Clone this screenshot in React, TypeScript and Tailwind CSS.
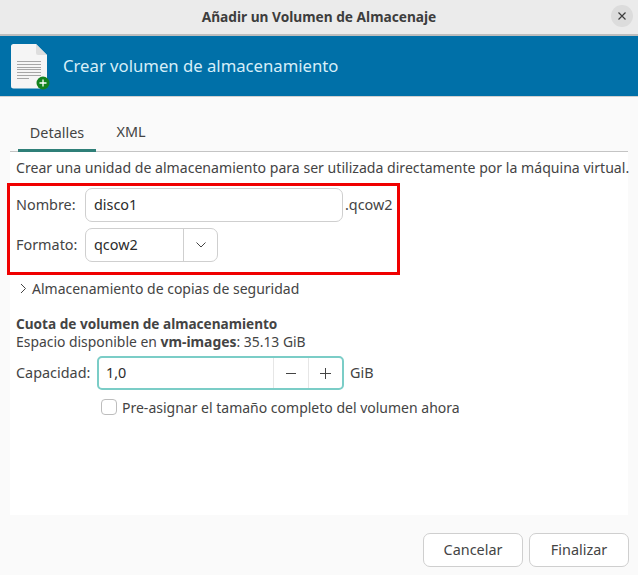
import React from "react";

const font = { fontFamily: "'Noto Sans', sans-serif" };

function DocIcon() {
  return (
    <svg width="42" height="48" viewBox="0 0 42 48" className="shrink-0">
      <path d="M3.500 2H26l11 11v31a2.500 2.500 0 0 1-2.500 2.500h-31A2.500 2.500 0 0 1 1 44V4.500a2.500 2.500 0 0 1 2.500-2.500z" fill="#f5f5f5" />
      <path d="M26 2l11 11h-9a2 2 0 0 1-2-2z" fill="#dedede" />
      <g stroke="#a6a6a6" strokeWidth="1">
        <path d="M7 19.500h24M7 22.500h24M7 25.500h24M7 27.500h24M7 30.500h24M7 33.500h24M7 36.500h12" />
      </g>
      <circle cx="33" cy="41" r="6.500" fill="#13831f" />
      <path d="M33 37.500v7M29.500 41h7" stroke="#fff" strokeWidth="1.300" />
    </svg>
  );
}

export default function App() {
  return (
    <div style={font} className="w-[638px] h-[575px] flex flex-col bg-[#fafafa] text-[14.4px] text-[#444444] overflow-hidden">
      <div className="h-[36px] shrink-0 relative flex items-center justify-center bg-[#ebebeb] border-b-2 border-[#bdbdbd]">
        <span className="font-bold text-[13.7px] text-[#3d3d3d]">Añadir un Volumen de Almacenaje</span>
        <button className="absolute right-[5px] top-[5px] w-[22px] h-[22px] rounded-full bg-[#dcdcdc] flex items-center justify-center">
          <svg width="10" height="10" viewBox="0 0 10 10">
            <path d="M1.500 1.500l7 7M8.500 1.500l-7 7" stroke="#3d3d3d" strokeWidth="1.200" />
          </svg>
        </button>
      </div>

      <div className="h-[61px] shrink-0 flex items-center bg-[#0070a8] border-b border-[#d0d0d0] pl-[10px] gap-[11px]">
        <DocIcon />
        <span className="text-[16.7px] text-[#d6eef8]">Crear volumen de almacenamiento</span>
      </div>

      <div className="h-[55px] shrink-0 flex items-end pl-[10px] pr-[10px]">
        <div className="flex w-full h-[36px] border-b border-[#c4c4c4]">
          <div className="w-[78px] ml-[8px] flex items-center justify-center border-b-[3px] border-[#2f7f78] -mb-px">Detalles</div>
          <div className="ml-[2px] w-[66px] flex items-center justify-center pb-[3px]">XML</div>
        </div>
      </div>

      <div className="h-[363px] shrink-0 mx-[10px] bg-white flex flex-col">
        <p className="pl-[6px] mt-[5px] h-[21px] leading-[21px] whitespace-nowrap text-[14.1px]">Crear una unidad de almacenamiento para ser utilizada directamente por la máquina virtual.</p>
        <div className="w-[393px] h-[92px] -ml-[3px] mt-[5px] border-[3px] border-[#f00000] flex flex-col pl-[6px] pt-[2px] gap-[6px]">
          <div className="flex items-center h-[34px]">
            <span className="w-[69px] pb-px">Nombre:</span>
            <div className="w-[258px] h-[34px] rounded-[7px] border border-[#cfcfcf] flex items-center px-[8px] pb-px text-[#2b2b2b]">disco1</div>
            <span className="ml-[2px] pb-px">.qcow2</span>
          </div>
          <div className="flex items-center h-[34px]">
            <span className="w-[69px] pb-px">Formato:</span>
            <div className="w-[133px] h-[34px] rounded-[7px] border border-[#cfcfcf] flex items-center text-[#2b2b2b]">
              <span className="w-[97px] pl-[8px] pb-px">qcow2</span>
              <span className="h-full flex-1 border-l border-[#cfcfcf] flex items-center justify-center">
                <svg width="12" height="8" viewBox="0 0 12 8"><path d="M1.500 1.500L6 6l4.500-4.500" fill="none" stroke="#444" strokeWidth="1" /></svg>
              </span>
            </div>
          </div>
        </div>
        <div className="flex items-center pl-[10px] mt-[2px] h-[22px] gap-[5px] text-[14px]">
          <svg width="7" height="11" viewBox="0 0 7 11"><path d="M1 1l4.500 4.500L1 10" fill="none" stroke="#444" strokeWidth="1" /></svg>
          <span>Almacenamiento de copias de seguridad</span>
        </div>
        <div className="pl-[6px] mt-[16px] font-bold text-[13.6px] h-[18px] leading-[18px]">Cuota de volumen de almacenamiento</div>
        <div className="pl-[6px] h-[18px] leading-[18px] text-[13.9px]">Espacio disponible en <b>vm-images</b>: 35.13 GiB</div>
        <div className="flex items-center pl-[6px] mt-[5px] h-[34px]">
          <span className="w-[81px] pb-px">Capacidad:</span>
          <div className="w-[247px] h-[34px] rounded-[5px] border-2 border-[#7bcdc7] flex items-center text-[#2b2b2b]">
            <span className="w-[174px] pl-[7px] pb-px">1,0</span>
            <span className="h-full w-[35px] border-l border-[#e6e6e6] flex items-center justify-center">
              <svg width="12" height="12" viewBox="0 0 12 12"><path d="M1 6.500h10" stroke="#444" strokeWidth="1" /></svg>
            </span>
            <span className="h-full flex-1 border-l border-[#e6e6e6] flex items-center justify-center">
              <svg width="13" height="13" viewBox="0 0 13 13"><path d="M1 6.500h11M6.500 1v11" stroke="#444" strokeWidth="1" /></svg>
            </span>
          </div>
          <span className="ml-[6px] pb-px">GiB</span>
        </div>
        <div className="flex items-center mt-[8px] ml-[91px] h-[18px] gap-[5px] text-[14px]">
          <span className="w-[16px] h-[16px] rounded-[4px] border border-[#bdbdbd] bg-white" />
          <span>Pre-asignar el tamaño completo del volumen ahora</span>
        </div>
      </div>

      <div className="flex-1 flex justify-end items-start pt-[18px] pr-[9px] gap-[6px]">
        <button className="w-[100px] h-[34px] rounded-[7px] border border-[#cfcfcf] bg-white pb-px">Cancelar</button>
        <button className="w-[100px] h-[34px] rounded-[7px] border border-[#cfcfcf] bg-white pb-px">Finalizar</button>
      </div>
    </div>
  );
}
